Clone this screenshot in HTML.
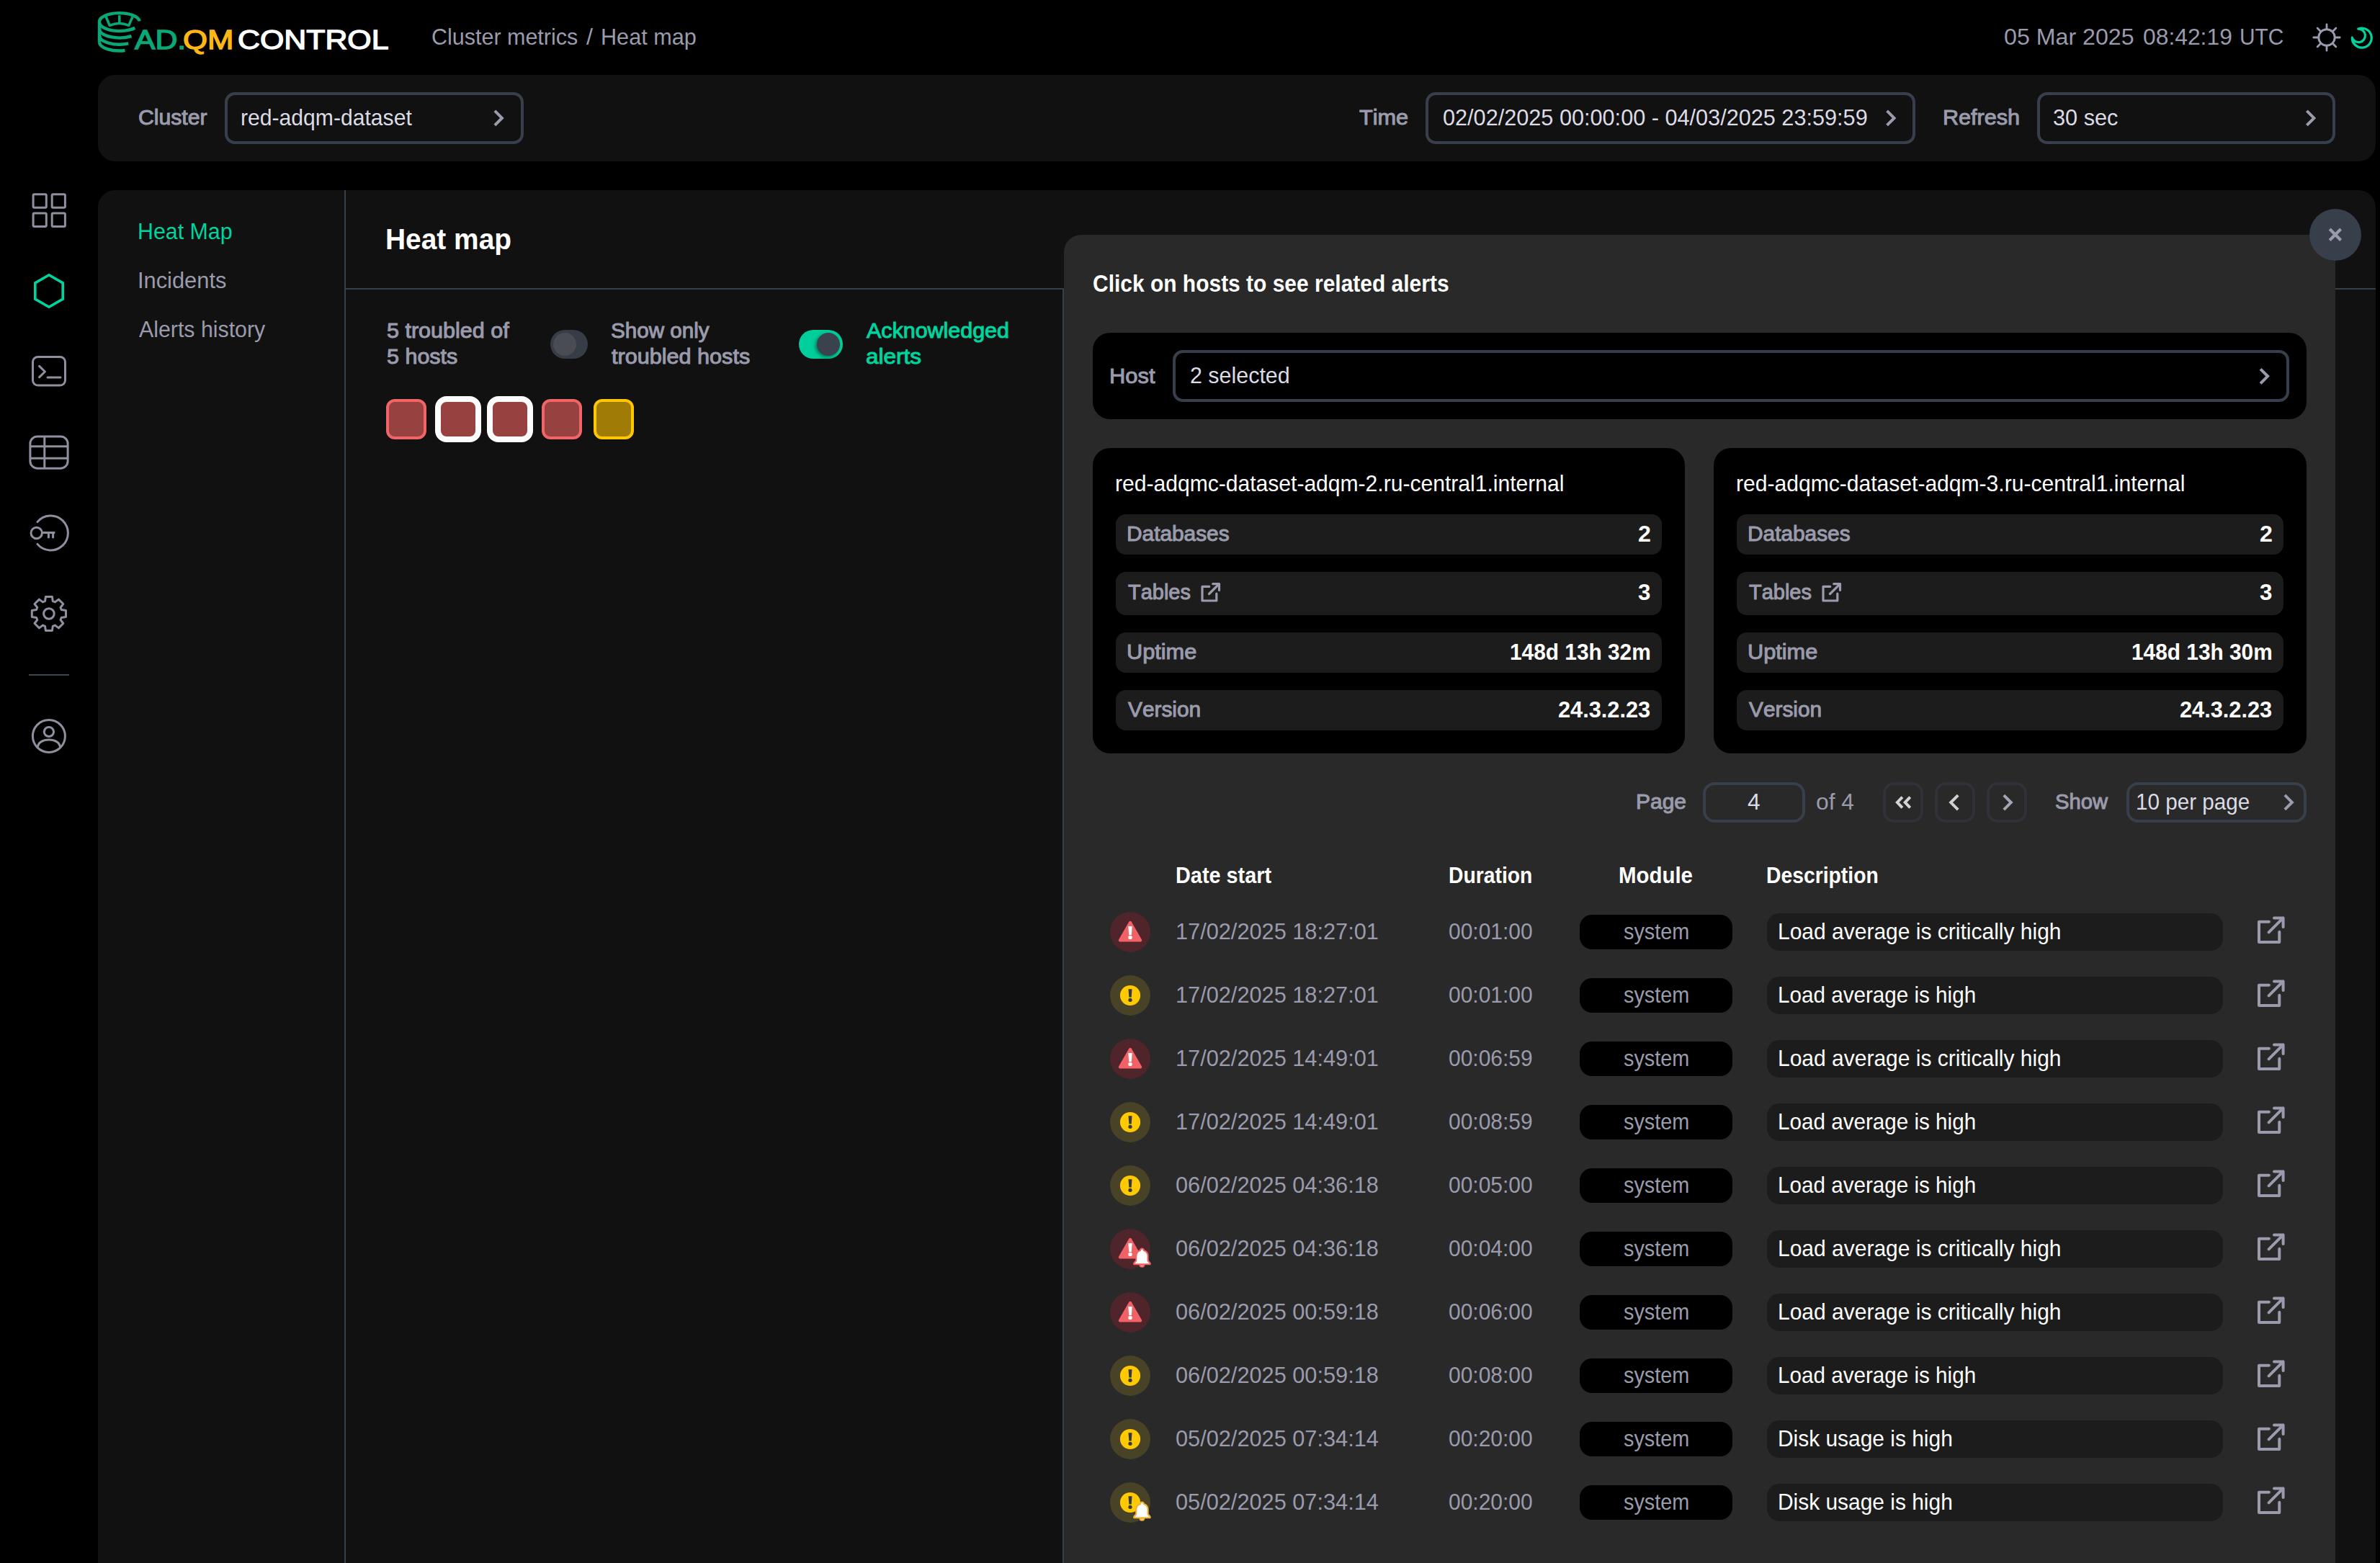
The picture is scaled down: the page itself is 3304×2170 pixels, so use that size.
<!DOCTYPE html>
<html lang="en"><head><meta charset="utf-8"><title>AD.QM CONTROL - Heat map</title>
<style>
html,body{margin:0;padding:0;background:#000;overflow:hidden;}
body{width:3304px;height:2170px;overflow:hidden;position:relative;font-family:"Liberation Sans",sans-serif;}
.b{position:absolute;}
.t{position:absolute;white-space:nowrap;line-height:1;transform-origin:0 0;font-kerning:none;}
svg.ov{position:absolute;left:0;top:0;pointer-events:none;}
</style></head><body>
<div class="b" style="left:136px;top:104px;width:3162px;height:120px;background:#111;border-radius:24px;"></div>
<div class="b" style="left:136px;top:264px;width:3162px;height:1906px;background:#111;border-radius:24px 24px 0 0;"></div>
<div class="b" style="left:478px;top:264px;width:2px;height:1906px;background:#35404b;"></div>
<div class="b" style="left:480px;top:400px;width:2818px;height:2px;background:#35404b;"></div>
<div class="b" style="left:1475px;top:400px;width:2px;height:1770px;background:#35404b;"></div>
<div class="b" style="left:1477px;top:326px;width:1765px;height:1844px;background:#292929;border-radius:24px 0 0 0;"></div>
<div class="b" style="left:3206px;top:290px;width:72px;height:72px;background:#363f4a;border-radius:50%;"></div>
<span class="t" id="lg_ad" style="left:186.57px;top:38.40px;font-size:36px;color:#0aa877;-webkit-text-stroke:1.3px;transform:scaleX(1.1861);">AD.</span>
<span class="t" id="lg_qm" style="left:253.98px;top:38.40px;font-size:36px;color:#fdb714;-webkit-text-stroke:1.3px;transform:scaleX(1.2150);">QM</span>
<span class="t" id="lg_ct" style="left:329.97px;top:38.40px;font-size:36px;color:#fff;-webkit-text-stroke:1.3px;transform:scaleX(1.1903);">CONTROL</span>
<span class="t" id="bc1" style="left:599.45px;top:36.10px;font-size:31.5px;color:#9a9bac;transform:scaleX(0.9677);">Cluster metrics</span>
<span class="t" id="bc2" style="left:814.00px;top:36.10px;font-size:31.5px;color:#9a9bac;transform:scaleX(1.0284);">/</span>
<span class="t" id="bc3" style="left:833.89px;top:36.10px;font-size:31.5px;color:#9a9bac;transform:scaleX(0.9717);">Heat map</span>
<span class="t" id="dt1" style="left:2781.74px;top:36.10px;font-size:31.5px;color:#9a9bac;transform:scaleX(1.0212);">05 Mar 2025</span>
<span class="t" id="dt2" style="left:2975.46px;top:35.10px;font-size:32px;color:#9a9bac;transform:scaleX(0.9943);">08:42:19</span>
<span class="t" id="dt3" style="left:3108.69px;top:36.10px;font-size:31.5px;color:#9a9bac;transform:scaleX(0.9491);">UTC</span>
<span class="t" id="f_cl" style="left:191.67px;top:148.30px;font-size:29.5px;color:#9a9bac;-webkit-text-stroke:1.0px;transform:scaleX(1.0224);">Cluster</span>
<div class="b" style="left:312px;top:128px;width:415px;height:72px;border:4px solid #363f4a;border-radius:14px;box-sizing:border-box;background:transparent"></div>
<span class="t" id="f_clv" style="left:334.40px;top:148.00px;font-size:31.5px;color:#dcdce6;transform:scaleX(0.9565);">red-adqm-dataset</span>
<span class="t" id="f_tm" style="left:1887.31px;top:148.30px;font-size:29.5px;color:#9a9bac;-webkit-text-stroke:1.0px;transform:scaleX(1.0396);">Time</span>
<div class="b" style="left:1979px;top:128px;width:680px;height:72px;border:4px solid #363f4a;border-radius:14px;box-sizing:border-box;background:transparent"></div>
<span class="t" id="f_tmv" style="left:2002.50px;top:147.00px;font-size:32px;color:#dcdce6;transform:scaleX(0.9578);">02/02/2025 00:00:00 - 04/03/2025 23:59:59</span>
<span class="t" id="f_rf" style="left:2697.29px;top:148.30px;font-size:29.5px;color:#9a9bac;-webkit-text-stroke:1.0px;transform:scaleX(1.0368);">Refresh</span>
<div class="b" style="left:2828px;top:128px;width:414px;height:72px;border:4px solid #363f4a;border-radius:14px;box-sizing:border-box;background:transparent"></div>
<span class="t" id="f_rfv" style="left:2849.83px;top:148.00px;font-size:31.5px;color:#dcdce6;transform:scaleX(0.9738);">30 sec</span>
<span class="t" id="n1" style="left:190.91px;top:306.60px;font-size:30.8px;color:#00d49e;transform:scaleX(0.9853);">Heat Map</span>
<span class="t" id="n2" style="left:191.26px;top:374.50px;font-size:30.8px;color:#9a9bac;transform:scaleX(1.0007);">Incidents</span>
<span class="t" id="n3" style="left:192.94px;top:442.90px;font-size:30.8px;color:#9a9bac;transform:scaleX(0.9844);">Alerts history</span>
<span class="t" id="hm_t" style="left:535.20px;top:311.80px;font-size:41px;color:#fff;font-weight:bold;transform:scaleX(0.9482);">Heat map</span>
<span class="t" id="hm_a1" style="left:536.78px;top:445.10px;font-size:29.0px;color:#9a9bac;-webkit-text-stroke:1.0px;transform:scaleX(1.0530);">5 troubled of</span>
<span class="t" id="hm_a2" style="left:536.78px;top:481.10px;font-size:29.0px;color:#9a9bac;-webkit-text-stroke:1.0px;transform:scaleX(1.0516);">5 hosts</span>
<div class="b" style="left:764px;top:458px;width:52px;height:40px;background:#363d47;border-radius:20px;"></div>
<div class="b" style="left:768px;top:462px;width:32px;height:32px;background:#494d53;border-radius:50%;"></div>
<span class="t" id="hm_b1" style="left:847.96px;top:445.10px;font-size:29.0px;color:#9a9bac;-webkit-text-stroke:1.0px;transform:scaleX(1.0209);">Show only</span>
<span class="t" id="hm_b2" style="left:848.84px;top:481.10px;font-size:29.0px;color:#9a9bac;-webkit-text-stroke:1.0px;transform:scaleX(1.0549);">troubled hosts</span>
<div class="b" style="left:1109px;top:458px;width:61px;height:40px;background:#00cf9b;border-radius:20px;"></div>
<div class="b" style="left:1134px;top:462px;width:32px;height:32px;background:#3a424d;border-radius:50%;box-shadow:-2px 2px 5px rgba(0,80,60,.7);"></div>
<span class="t" id="hm_c1" style="left:1202.94px;top:445.10px;font-size:29.0px;color:#00d49e;-webkit-text-stroke:1.0px;transform:scaleX(1.0493);">Acknowledged</span>
<span class="t" id="hm_c2" style="left:1201.66px;top:481.10px;font-size:29.0px;color:#00d49e;-webkit-text-stroke:1.0px;transform:scaleX(1.0855);">alerts</span>
<div class="b" style="left:536px;top:554px;width:56px;height:56px;box-sizing:border-box;border:4px solid #f26466;background:#974141;border-radius:12px"></div>
<div class="b" style="left:604px;top:550px;width:64px;height:64px;box-sizing:border-box;border:8px solid #fcfcfc;background:#974141;border-radius:16px"></div>
<div class="b" style="left:676px;top:550px;width:64px;height:64px;box-sizing:border-box;border:8px solid #fcfcfc;background:#974141;border-radius:16px"></div>
<div class="b" style="left:752px;top:554px;width:56px;height:56px;box-sizing:border-box;border:4px solid #f26466;background:#974141;border-radius:12px"></div>
<div class="b" style="left:824px;top:554px;width:56px;height:56px;box-sizing:border-box;border:4px solid #ffc700;background:#a07c07;border-radius:12px"></div>
<span class="t" id="d_t" style="left:1516.67px;top:378.00px;font-size:32.5px;color:#fff;font-weight:bold;transform:scaleX(0.9219);">Click on hosts to see related alerts</span>
<div class="b" style="left:1517px;top:462px;width:1685px;height:120px;background:#000;border-radius:24px;"></div>
<span class="t" id="d_h" style="left:1539.67px;top:506.50px;font-size:29.5px;color:#9a9bac;-webkit-text-stroke:1.0px;transform:scaleX(1.0462);">Host</span>
<div class="b" style="left:1628px;top:486px;width:1550px;height:72px;border:4px solid #363f4a;border-radius:14px;box-sizing:border-box;background:transparent"></div>
<span class="t" id="d_hv" style="left:1652.27px;top:506.20px;font-size:31.5px;color:#dcdce6;transform:scaleX(0.9658);">2 selected</span>
<div class="b" style="left:1517px;top:622px;width:822px;height:424px;background:#000;border-radius:24px;"></div>
<span class="t" id="c1_t" style="left:1548.20px;top:655.50px;font-size:31.5px;color:#fff;transform:scaleX(0.9546);">red-adqmc-dataset-adqm-2.ru-central1.internal</span>
<div class="b" style="left:1549px;top:714px;width:758px;height:56px;background:#1c1c1c;border-radius:14px;"></div>
<span class="t" id="c1_l0" style="left:1564.05px;top:726.20px;font-size:29.5px;color:#9a9bac;-webkit-text-stroke:1.0px;transform:scaleX(1.0113);">Databases</span>
<span class="t" id="c1_v0" style="left:2273.58px;top:724.90px;font-size:32px;color:#fff;font-weight:bold;transform:scaleX(1.0061);">2</span>
<div class="b" style="left:1549px;top:794px;width:758px;height:60px;background:#1c1c1c;border-radius:14px;"></div>
<span class="t" id="c1_l1" style="left:1565.85px;top:807.40px;font-size:29.5px;color:#9a9bac;-webkit-text-stroke:1.0px;transform:scaleX(0.9814);">Tables</span>
<span class="t" id="c1_v1" style="left:2273.98px;top:806.10px;font-size:32px;color:#fff;font-weight:bold;transform:scaleX(0.9745);">3</span>
<div class="b" style="left:1549px;top:878px;width:758px;height:56px;background:#1c1c1c;border-radius:14px;"></div>
<span class="t" id="c1_l2" style="left:1564.13px;top:890.20px;font-size:29.5px;color:#9a9bac;-webkit-text-stroke:1.0px;transform:scaleX(1.0406);">Uptime</span>
<span class="t" id="c1_v2" style="left:2096.32px;top:888.90px;font-size:32px;color:#fff;font-weight:bold;transform:scaleX(0.9325);">148d 13h 32m</span>
<div class="b" style="left:1549px;top:958px;width:758px;height:56px;background:#1c1c1c;border-radius:14px;"></div>
<span class="t" id="c1_l3" style="left:1566.37px;top:970.20px;font-size:29.5px;color:#9a9bac;-webkit-text-stroke:1.0px;transform:scaleX(1.0104);">Version</span>
<span class="t" id="c1_v3" style="left:2163.13px;top:968.90px;font-size:32px;color:#fff;font-weight:bold;transform:scaleX(0.9605);">24.3.2.23</span>
<div class="b" style="left:2379px;top:622px;width:823px;height:424px;background:#000;border-radius:24px;"></div>
<span class="t" id="c2_t" style="left:2410.20px;top:655.50px;font-size:31.5px;color:#fff;transform:scaleX(0.9546);">red-adqmc-dataset-adqm-3.ru-central1.internal</span>
<div class="b" style="left:2411px;top:714px;width:759px;height:56px;background:#1c1c1c;border-radius:14px;"></div>
<span class="t" id="c2_l0" style="left:2426.05px;top:726.20px;font-size:29.5px;color:#9a9bac;-webkit-text-stroke:1.0px;transform:scaleX(1.0113);">Databases</span>
<span class="t" id="c2_v0" style="left:3136.58px;top:724.90px;font-size:32px;color:#fff;font-weight:bold;transform:scaleX(1.0061);">2</span>
<div class="b" style="left:2411px;top:794px;width:759px;height:60px;background:#1c1c1c;border-radius:14px;"></div>
<span class="t" id="c2_l1" style="left:2427.85px;top:807.40px;font-size:29.5px;color:#9a9bac;-webkit-text-stroke:1.0px;transform:scaleX(0.9814);">Tables</span>
<span class="t" id="c2_v1" style="left:3136.98px;top:806.10px;font-size:32px;color:#fff;font-weight:bold;transform:scaleX(0.9745);">3</span>
<div class="b" style="left:2411px;top:878px;width:759px;height:56px;background:#1c1c1c;border-radius:14px;"></div>
<span class="t" id="c2_l2" style="left:2426.13px;top:890.20px;font-size:29.5px;color:#9a9bac;-webkit-text-stroke:1.0px;transform:scaleX(1.0406);">Uptime</span>
<span class="t" id="c2_v2" style="left:2959.32px;top:888.90px;font-size:32px;color:#fff;font-weight:bold;transform:scaleX(0.9325);">148d 13h 30m</span>
<div class="b" style="left:2411px;top:958px;width:759px;height:56px;background:#1c1c1c;border-radius:14px;"></div>
<span class="t" id="c2_l3" style="left:2428.37px;top:970.20px;font-size:29.5px;color:#9a9bac;-webkit-text-stroke:1.0px;transform:scaleX(1.0104);">Version</span>
<span class="t" id="c2_v3" style="left:3026.13px;top:968.90px;font-size:32px;color:#fff;font-weight:bold;transform:scaleX(0.9605);">24.3.2.23</span>
<span class="t" id="p_pg" style="left:2270.84px;top:1098.00px;font-size:29.5px;color:#9a9bac;-webkit-text-stroke:1.0px;transform:scaleX(1.0159);">Page</span>
<div class="b" style="left:2364px;top:1086px;width:142px;height:56px;border:4px solid #363f4a;border-radius:16px;box-sizing:border-box;background:transparent"></div>
<span class="t" id="p_n" style="left:2426.27px;top:1096.70px;font-size:32px;color:#dcdce6;transform:scaleX(0.9922);">4</span>
<span class="t" id="p_of" style="left:2521.06px;top:1097.70px;font-size:31.5px;color:#9a9bac;transform:scaleX(1.0100);">of 4</span>
<div class="b" style="left:2614px;top:1086px;width:56px;height:56px;border:4px solid #313239;border-radius:15px;box-sizing:border-box"></div>
<div class="b" style="left:2686px;top:1086px;width:56px;height:56px;border:4px solid #313239;border-radius:15px;box-sizing:border-box"></div>
<div class="b" style="left:2758px;top:1086px;width:56px;height:56px;border:4px solid #313239;border-radius:15px;box-sizing:border-box"></div>
<span class="t" id="p_sh" style="left:2853.48px;top:1098.00px;font-size:29.5px;color:#9a9bac;-webkit-text-stroke:1.0px;transform:scaleX(0.9886);">Show</span>
<div class="b" style="left:2952px;top:1086px;width:250px;height:56px;border:4px solid #363f4a;border-radius:16px;box-sizing:border-box;background:transparent"></div>
<span class="t" id="p_pp" style="left:2965.44px;top:1097.70px;font-size:31.5px;color:#dcdce6;transform:scaleX(0.9413);">10 per page</span>
<span class="t" id="th1" style="left:1632.17px;top:1199.10px;font-size:32px;color:#fff;font-weight:bold;transform:scaleX(0.9016);">Date start</span>
<span class="t" id="th2" style="left:2010.61px;top:1199.10px;font-size:32px;color:#fff;font-weight:bold;transform:scaleX(0.8845);">Duration</span>
<span class="t" id="th3" style="left:2247.03px;top:1199.10px;font-size:32px;color:#fff;font-weight:bold;transform:scaleX(0.9195);">Module</span>
<span class="t" id="th4" style="left:2451.51px;top:1199.10px;font-size:32px;color:#fff;font-weight:bold;transform:scaleX(0.8848);">Description</span>
<div class="b" style="left:1541px;top:1266px;width:56px;height:56px;background:#4f252b;border-radius:50%;"></div>
<span class="t" id="r0_d" style="left:1631.96px;top:1277.00px;font-size:32px;color:#9a9bac;transform:scaleX(0.9599);">17/02/2025 18:27:01</span>
<span class="t" id="r0_u" style="left:2010.53px;top:1277.00px;font-size:32px;color:#9a9bac;transform:scaleX(0.9364);">00:01:00</span>
<div class="b" style="left:2193px;top:1270px;width:212px;height:48px;background:#000;border-radius:17px;"></div>
<span class="t" id="r0_m" style="left:2253.60px;top:1278.00px;font-size:30.5px;color:#9a9bac;transform:scaleX(0.9452);">system</span>
<div class="b" style="left:2453px;top:1268px;width:633px;height:52px;background:#1c1c1c;border-radius:17px;"></div>
<span class="t" id="r0_e" style="left:2468.24px;top:1278.00px;font-size:31.5px;color:#fff;transform:scaleX(0.9523);">Load average is critically high</span>
<div class="b" style="left:1541px;top:1354px;width:56px;height:56px;background:#484327;border-radius:50%;"></div>
<span class="t" id="r1_d" style="left:1631.96px;top:1365.00px;font-size:32px;color:#9a9bac;transform:scaleX(0.9599);">17/02/2025 18:27:01</span>
<span class="t" id="r1_u" style="left:2010.53px;top:1365.00px;font-size:32px;color:#9a9bac;transform:scaleX(0.9364);">00:01:00</span>
<div class="b" style="left:2193px;top:1358px;width:212px;height:48px;background:#000;border-radius:17px;"></div>
<span class="t" id="r1_m" style="left:2253.60px;top:1366.00px;font-size:30.5px;color:#9a9bac;transform:scaleX(0.9452);">system</span>
<div class="b" style="left:2453px;top:1356px;width:633px;height:52px;background:#1c1c1c;border-radius:17px;"></div>
<span class="t" id="r1_e" style="left:2468.27px;top:1366.00px;font-size:31.5px;color:#fff;transform:scaleX(0.9408);">Load average is high</span>
<div class="b" style="left:1541px;top:1442px;width:56px;height:56px;background:#4f252b;border-radius:50%;"></div>
<span class="t" id="r2_d" style="left:1631.96px;top:1453.00px;font-size:32px;color:#9a9bac;transform:scaleX(0.9599);">17/02/2025 14:49:01</span>
<span class="t" id="r2_u" style="left:2010.53px;top:1453.00px;font-size:32px;color:#9a9bac;transform:scaleX(0.9364);">00:06:59</span>
<div class="b" style="left:2193px;top:1446px;width:212px;height:48px;background:#000;border-radius:17px;"></div>
<span class="t" id="r2_m" style="left:2253.60px;top:1454.00px;font-size:30.5px;color:#9a9bac;transform:scaleX(0.9452);">system</span>
<div class="b" style="left:2453px;top:1444px;width:633px;height:52px;background:#1c1c1c;border-radius:17px;"></div>
<span class="t" id="r2_e" style="left:2468.24px;top:1454.00px;font-size:31.5px;color:#fff;transform:scaleX(0.9523);">Load average is critically high</span>
<div class="b" style="left:1541px;top:1530px;width:56px;height:56px;background:#484327;border-radius:50%;"></div>
<span class="t" id="r3_d" style="left:1631.96px;top:1541.00px;font-size:32px;color:#9a9bac;transform:scaleX(0.9599);">17/02/2025 14:49:01</span>
<span class="t" id="r3_u" style="left:2010.53px;top:1541.00px;font-size:32px;color:#9a9bac;transform:scaleX(0.9364);">00:08:59</span>
<div class="b" style="left:2193px;top:1534px;width:212px;height:48px;background:#000;border-radius:17px;"></div>
<span class="t" id="r3_m" style="left:2253.60px;top:1542.00px;font-size:30.5px;color:#9a9bac;transform:scaleX(0.9452);">system</span>
<div class="b" style="left:2453px;top:1532px;width:633px;height:52px;background:#1c1c1c;border-radius:17px;"></div>
<span class="t" id="r3_e" style="left:2468.27px;top:1542.00px;font-size:31.5px;color:#fff;transform:scaleX(0.9408);">Load average is high</span>
<div class="b" style="left:1541px;top:1618px;width:56px;height:56px;background:#484327;border-radius:50%;"></div>
<span class="t" id="r4_d" style="left:1631.96px;top:1629.00px;font-size:32px;color:#9a9bac;transform:scaleX(0.9599);">06/02/2025 04:36:18</span>
<span class="t" id="r4_u" style="left:2010.53px;top:1629.00px;font-size:32px;color:#9a9bac;transform:scaleX(0.9364);">00:05:00</span>
<div class="b" style="left:2193px;top:1622px;width:212px;height:48px;background:#000;border-radius:17px;"></div>
<span class="t" id="r4_m" style="left:2253.60px;top:1630.00px;font-size:30.5px;color:#9a9bac;transform:scaleX(0.9452);">system</span>
<div class="b" style="left:2453px;top:1620px;width:633px;height:52px;background:#1c1c1c;border-radius:17px;"></div>
<span class="t" id="r4_e" style="left:2468.27px;top:1630.00px;font-size:31.5px;color:#fff;transform:scaleX(0.9408);">Load average is high</span>
<div class="b" style="left:1541px;top:1706px;width:56px;height:56px;background:#4f252b;border-radius:50%;"></div>
<span class="t" id="r5_d" style="left:1631.96px;top:1717.00px;font-size:32px;color:#9a9bac;transform:scaleX(0.9599);">06/02/2025 04:36:18</span>
<span class="t" id="r5_u" style="left:2010.53px;top:1717.00px;font-size:32px;color:#9a9bac;transform:scaleX(0.9364);">00:04:00</span>
<div class="b" style="left:2193px;top:1710px;width:212px;height:48px;background:#000;border-radius:17px;"></div>
<span class="t" id="r5_m" style="left:2253.60px;top:1718.00px;font-size:30.5px;color:#9a9bac;transform:scaleX(0.9452);">system</span>
<div class="b" style="left:2453px;top:1708px;width:633px;height:52px;background:#1c1c1c;border-radius:17px;"></div>
<span class="t" id="r5_e" style="left:2468.24px;top:1718.00px;font-size:31.5px;color:#fff;transform:scaleX(0.9523);">Load average is critically high</span>
<div class="b" style="left:1541px;top:1794px;width:56px;height:56px;background:#4f252b;border-radius:50%;"></div>
<span class="t" id="r6_d" style="left:1631.96px;top:1805.00px;font-size:32px;color:#9a9bac;transform:scaleX(0.9599);">06/02/2025 00:59:18</span>
<span class="t" id="r6_u" style="left:2010.53px;top:1805.00px;font-size:32px;color:#9a9bac;transform:scaleX(0.9364);">00:06:00</span>
<div class="b" style="left:2193px;top:1798px;width:212px;height:48px;background:#000;border-radius:17px;"></div>
<span class="t" id="r6_m" style="left:2253.60px;top:1806.00px;font-size:30.5px;color:#9a9bac;transform:scaleX(0.9452);">system</span>
<div class="b" style="left:2453px;top:1796px;width:633px;height:52px;background:#1c1c1c;border-radius:17px;"></div>
<span class="t" id="r6_e" style="left:2468.24px;top:1806.00px;font-size:31.5px;color:#fff;transform:scaleX(0.9523);">Load average is critically high</span>
<div class="b" style="left:1541px;top:1882px;width:56px;height:56px;background:#484327;border-radius:50%;"></div>
<span class="t" id="r7_d" style="left:1631.96px;top:1893.00px;font-size:32px;color:#9a9bac;transform:scaleX(0.9599);">06/02/2025 00:59:18</span>
<span class="t" id="r7_u" style="left:2010.53px;top:1893.00px;font-size:32px;color:#9a9bac;transform:scaleX(0.9364);">00:08:00</span>
<div class="b" style="left:2193px;top:1886px;width:212px;height:48px;background:#000;border-radius:17px;"></div>
<span class="t" id="r7_m" style="left:2253.60px;top:1894.00px;font-size:30.5px;color:#9a9bac;transform:scaleX(0.9452);">system</span>
<div class="b" style="left:2453px;top:1884px;width:633px;height:52px;background:#1c1c1c;border-radius:17px;"></div>
<span class="t" id="r7_e" style="left:2468.27px;top:1894.00px;font-size:31.5px;color:#fff;transform:scaleX(0.9408);">Load average is high</span>
<div class="b" style="left:1541px;top:1970px;width:56px;height:56px;background:#484327;border-radius:50%;"></div>
<span class="t" id="r8_d" style="left:1631.96px;top:1981.00px;font-size:32px;color:#9a9bac;transform:scaleX(0.9599);">05/02/2025 07:34:14</span>
<span class="t" id="r8_u" style="left:2010.53px;top:1981.00px;font-size:32px;color:#9a9bac;transform:scaleX(0.9364);">00:20:00</span>
<div class="b" style="left:2193px;top:1974px;width:212px;height:48px;background:#000;border-radius:17px;"></div>
<span class="t" id="r8_m" style="left:2253.60px;top:1982.00px;font-size:30.5px;color:#9a9bac;transform:scaleX(0.9452);">system</span>
<div class="b" style="left:2453px;top:1972px;width:633px;height:52px;background:#1c1c1c;border-radius:17px;"></div>
<span class="t" id="r8_e" style="left:2468.25px;top:1982.00px;font-size:31.5px;color:#fff;transform:scaleX(0.9498);">Disk usage is high</span>
<div class="b" style="left:1541px;top:2058px;width:56px;height:56px;background:#484327;border-radius:50%;"></div>
<span class="t" id="r9_d" style="left:1631.96px;top:2069.00px;font-size:32px;color:#9a9bac;transform:scaleX(0.9599);">05/02/2025 07:34:14</span>
<span class="t" id="r9_u" style="left:2010.53px;top:2069.00px;font-size:32px;color:#9a9bac;transform:scaleX(0.9364);">00:20:00</span>
<div class="b" style="left:2193px;top:2062px;width:212px;height:48px;background:#000;border-radius:17px;"></div>
<span class="t" id="r9_m" style="left:2253.60px;top:2070.00px;font-size:30.5px;color:#9a9bac;transform:scaleX(0.9452);">system</span>
<div class="b" style="left:2453px;top:2060px;width:633px;height:52px;background:#1c1c1c;border-radius:17px;"></div>
<span class="t" id="r9_e" style="left:2468.25px;top:2070.00px;font-size:31.5px;color:#fff;transform:scaleX(0.9498);">Disk usage is high</span>
<svg class="ov" width="3304" height="2170" viewBox="0 0 3304 2170">
<path d="M3234.2 318 L3249.6 333.4 M3249.6 318 L3234.2 333.4" stroke="#9a9bac" stroke-width="4.2" fill="none"/>
<path d="M686.9 153.9 L696.9 163.9 L686.9 173.9" stroke="#9a9bac" stroke-width="4" fill="none"/>
<path d="M2619.6 153.9 L2629.6 163.9 L2619.6 173.9" stroke="#9a9bac" stroke-width="4" fill="none"/>
<path d="M3202.4 153.9 L3212.4 163.9 L3202.4 173.9" stroke="#9a9bac" stroke-width="4" fill="none"/>
<path d="M3138.1 512.3 L3148.1 522.3 L3138.1 532.3" stroke="#9a9bac" stroke-width="4" fill="none"/>
<path d="M1678.7 814.4 H1669.0 V834.0 H1688.8 V824.2 M1678.5 824.5 L1692.5 810.6 M1683.7 810.6 H1692.5 V819.5" stroke="#9a9bac" stroke-width="3.2" fill="none" stroke-linecap="round" stroke-linejoin="round"/>
<path d="M2540.7 814.4 H2531.0 V834.0 H2550.8 V824.2 M2540.5 824.5 L2554.5 810.6 M2545.7 810.6 H2554.5 V819.5" stroke="#9a9bac" stroke-width="3.2" fill="none" stroke-linecap="round" stroke-linejoin="round"/>
<path d="M2640.9 1106.6 L2633.9 1114.0 L2640.9 1121.4" stroke="#d4d4d4" stroke-width="4" fill="none"/>
<path d="M2651.7 1106.6 L2644.7 1114.0 L2651.7 1121.4" stroke="#d4d4d4" stroke-width="4" fill="none"/>
<path d="M2718.2 1104.1 L2708.2 1114.1 L2718.2 1124.1" stroke="#d0d0d0" stroke-width="4" fill="none"/>
<path d="M2781.8 1104.1 L2791.8 1114.1 L2781.8 1124.1" stroke="#a3a4b5" stroke-width="4" fill="none"/>
<path d="M3171.9 1103.9 L3181.9 1113.9 L3171.9 1123.9" stroke="#9a9bac" stroke-width="4" fill="none"/>
<path d="M1569 1280.8 L1583.2 1305.4 H1554.8 Z" fill="#f16267" stroke="#f16267" stroke-width="4" stroke-linejoin="round"/>
<path d="M1566.3 1286.1 H1571.7 L1570.8 1297.9 H1567.2 Z" fill="#fff"/><circle cx="1569" cy="1301.4" r="2.7" fill="#fff"/>
<path d="M3149.9 1279.8 H3136.0 V1307.9 H3164.3 V1293.8 M3149.6 1294.3 L3169.6 1274.4 M3157.0 1274.4 H3169.6 V1287.1" stroke="#9a9bac" stroke-width="4.0" fill="none" stroke-linecap="round" stroke-linejoin="round"/>
<circle cx="1569" cy="1382" r="14.1" fill="#ffc900"/>
<path d="M1566.5 1373.2 H1571.5 L1570.7 1384.4 H1567.3 Z" fill="#2f3a45"/><circle cx="1569" cy="1388.3" r="2.6" fill="#2f3a45"/>
<path d="M3149.9 1367.8 H3136.0 V1395.9 H3164.3 V1381.8 M3149.6 1382.3 L3169.6 1362.4 M3157.0 1362.4 H3169.6 V1375.1" stroke="#9a9bac" stroke-width="4.0" fill="none" stroke-linecap="round" stroke-linejoin="round"/>
<path d="M1569 1456.8 L1583.2 1481.4 H1554.8 Z" fill="#f16267" stroke="#f16267" stroke-width="4" stroke-linejoin="round"/>
<path d="M1566.3 1462.1 H1571.7 L1570.8 1473.9 H1567.2 Z" fill="#fff"/><circle cx="1569" cy="1477.4" r="2.7" fill="#fff"/>
<path d="M3149.9 1455.8 H3136.0 V1483.9 H3164.3 V1469.8 M3149.6 1470.3 L3169.6 1450.4 M3157.0 1450.4 H3169.6 V1463.1" stroke="#9a9bac" stroke-width="4.0" fill="none" stroke-linecap="round" stroke-linejoin="round"/>
<circle cx="1569" cy="1558" r="14.1" fill="#ffc900"/>
<path d="M1566.5 1549.2 H1571.5 L1570.7 1560.4 H1567.3 Z" fill="#2f3a45"/><circle cx="1569" cy="1564.3" r="2.6" fill="#2f3a45"/>
<path d="M3149.9 1543.8 H3136.0 V1571.9 H3164.3 V1557.8 M3149.6 1558.3 L3169.6 1538.4 M3157.0 1538.4 H3169.6 V1551.1" stroke="#9a9bac" stroke-width="4.0" fill="none" stroke-linecap="round" stroke-linejoin="round"/>
<circle cx="1569" cy="1646" r="14.1" fill="#ffc900"/>
<path d="M1566.5 1637.2 H1571.5 L1570.7 1648.4 H1567.3 Z" fill="#2f3a45"/><circle cx="1569" cy="1652.3" r="2.6" fill="#2f3a45"/>
<path d="M3149.9 1631.8 H3136.0 V1659.9 H3164.3 V1645.8 M3149.6 1646.3 L3169.6 1626.4 M3157.0 1626.4 H3169.6 V1639.1" stroke="#9a9bac" stroke-width="4.0" fill="none" stroke-linecap="round" stroke-linejoin="round"/>
<path d="M1569 1720.8 L1583.2 1745.4 H1554.8 Z" fill="#f16267" stroke="#f16267" stroke-width="4" stroke-linejoin="round"/>
<path d="M1566.3 1726.1 H1571.7 L1570.8 1737.9 H1567.2 Z" fill="#fff"/><circle cx="1569" cy="1741.4" r="2.7" fill="#fff"/>
<g transform="translate(1585.4 1732.3)"><path d="M0 1.2 C-1.5 1.2 -2.4 2.4 -2.4 3.6 C-6.6 4.8 -8.2 8.4 -8.2 12 V18 L-11.2 21.4 V23 H11.2 V21.4 L8.2 18 V12 C8.2 8.4 6.6 4.8 2.4 3.6 C2.4 2.4 1.5 1.2 0 1.2 Z M-2.8 23.6 A2.8 2.8 0 0 0 2.8 23.6 Z" fill="#fdfdfd" stroke="#f16267" stroke-width="2.1" stroke-linejoin="round"/></g>
<path d="M3149.9 1719.8 H3136.0 V1747.9 H3164.3 V1733.8 M3149.6 1734.3 L3169.6 1714.4 M3157.0 1714.4 H3169.6 V1727.1" stroke="#9a9bac" stroke-width="4.0" fill="none" stroke-linecap="round" stroke-linejoin="round"/>
<path d="M1569 1808.8 L1583.2 1833.4 H1554.8 Z" fill="#f16267" stroke="#f16267" stroke-width="4" stroke-linejoin="round"/>
<path d="M1566.3 1814.1 H1571.7 L1570.8 1825.9 H1567.2 Z" fill="#fff"/><circle cx="1569" cy="1829.4" r="2.7" fill="#fff"/>
<path d="M3149.9 1807.8 H3136.0 V1835.9 H3164.3 V1821.8 M3149.6 1822.3 L3169.6 1802.4 M3157.0 1802.4 H3169.6 V1815.1" stroke="#9a9bac" stroke-width="4.0" fill="none" stroke-linecap="round" stroke-linejoin="round"/>
<circle cx="1569" cy="1910" r="14.1" fill="#ffc900"/>
<path d="M1566.5 1901.2 H1571.5 L1570.7 1912.4 H1567.3 Z" fill="#2f3a45"/><circle cx="1569" cy="1916.3" r="2.6" fill="#2f3a45"/>
<path d="M3149.9 1895.8 H3136.0 V1923.9 H3164.3 V1909.8 M3149.6 1910.3 L3169.6 1890.4 M3157.0 1890.4 H3169.6 V1903.1" stroke="#9a9bac" stroke-width="4.0" fill="none" stroke-linecap="round" stroke-linejoin="round"/>
<circle cx="1569" cy="1998" r="14.1" fill="#ffc900"/>
<path d="M1566.5 1989.2 H1571.5 L1570.7 2000.4 H1567.3 Z" fill="#2f3a45"/><circle cx="1569" cy="2004.3" r="2.6" fill="#2f3a45"/>
<path d="M3149.9 1983.8 H3136.0 V2011.9 H3164.3 V1997.8 M3149.6 1998.3 L3169.6 1978.4 M3157.0 1978.4 H3169.6 V1991.1" stroke="#9a9bac" stroke-width="4.0" fill="none" stroke-linecap="round" stroke-linejoin="round"/>
<circle cx="1569" cy="2086" r="14.1" fill="#ffc900"/>
<path d="M1566.5 2077.2 H1571.5 L1570.7 2088.4 H1567.3 Z" fill="#2f3a45"/><circle cx="1569" cy="2092.3" r="2.6" fill="#2f3a45"/>
<g transform="translate(1585.4 2084.3)"><path d="M0 1.2 C-1.5 1.2 -2.4 2.4 -2.4 3.6 C-6.6 4.8 -8.2 8.4 -8.2 12 V18 L-11.2 21.4 V23 H11.2 V21.4 L8.2 18 V12 C8.2 8.4 6.6 4.8 2.4 3.6 C2.4 2.4 1.5 1.2 0 1.2 Z M-2.8 23.6 A2.8 2.8 0 0 0 2.8 23.6 Z" fill="#fdfdfd" stroke="#f1b238" stroke-width="2.1" stroke-linejoin="round"/></g>
<path d="M3149.9 2071.8 H3136.0 V2099.9 H3164.3 V2085.8 M3149.6 2086.3 L3169.6 2066.4 M3157.0 2066.4 H3169.6 V2079.1" stroke="#9a9bac" stroke-width="4.0" fill="none" stroke-linecap="round" stroke-linejoin="round"/>
<rect x="46.1" y="269.8" width="18.2" height="18.4" rx="1.5" fill="none" stroke="#8e8f9f" stroke-width="3"/>
<rect x="72.2" y="269.8" width="18.2" height="18.4" rx="1.5" fill="none" stroke="#8e8f9f" stroke-width="3"/>
<rect x="46.1" y="296.1" width="18.2" height="18.4" rx="1.5" fill="none" stroke="#8e8f9f" stroke-width="3"/>
<rect x="72.2" y="296.1" width="18.2" height="18.4" rx="1.5" fill="none" stroke="#8e8f9f" stroke-width="3"/>
<polygon points="68.0,381.8 87.2,392.9 87.2,415.1 68.0,426.2 48.8,415.1 48.8,392.9" fill="none" stroke="#00d49e" stroke-width="3.6" stroke-linejoin="miter"/>
<rect x="45.5" y="495.5" width="45" height="39.5" rx="7" fill="none" stroke="#8e8f9f" stroke-width="3"/>
<path d="M54.6 508.4 L62.4 516 L54.6 523.6 M66 524 H84" fill="none" stroke="#8e8f9f" stroke-width="3" stroke-linecap="round" stroke-linejoin="round"/>
<rect x="41.9" y="606" width="52.2" height="44.2" rx="10" fill="none" stroke="#8e8f9f" stroke-width="3"/>
<path d="M61.8 606 V650.2 M41.9 619.8 H94.1 M41.9 636.2 H94.1" fill="none" stroke="#8e8f9f" stroke-width="3"/>
<path d="M52.0 724.6 A24 24 0 1 1 52.0 755.4" fill="none" stroke="#8e8f9f" stroke-width="3" stroke-linecap="round"/>
<circle cx="50.7" cy="740" r="7.7" fill="none" stroke="#8e8f9f" stroke-width="3"/>
<path d="M58.4 739.5 H76.3 M67.4 739.5 V747.3 M73.6 739.5 V747.3" fill="none" stroke="#8e8f9f" stroke-width="3"/>
<path d="M62.5 834.6 L63.4 828.4 L72.4 828.4 L73.3 834.6 L76.4 835.9 L81.4 832.1 L87.8 838.5 L84.0 843.5 L85.3 846.6 L91.5 847.5 L91.5 856.5 L85.3 857.4 L84.0 860.5 L87.8 865.5 L81.4 871.9 L76.4 868.1 L73.3 869.4 L72.4 875.6 L63.4 875.6 L62.5 869.4 L59.4 868.1 L54.4 871.9 L48.0 865.5 L51.8 860.5 L50.5 857.4 L44.3 856.5 L44.3 847.5 L50.5 846.6 L51.8 843.5 L48.0 838.5 L54.4 832.1 L59.4 835.9 Z" fill="none" stroke="#8e8f9f" stroke-width="3" stroke-linejoin="round"/>
<circle cx="67.9" cy="852" r="7.3" fill="none" stroke="#8e8f9f" stroke-width="3"/>
<rect x="40" y="936" width="56" height="2" fill="#3a4651"/>
<circle cx="67.9" cy="1022" r="22.5" fill="none" stroke="#8e8f9f" stroke-width="3"/>
<circle cx="67.9" cy="1016" r="6.6" fill="none" stroke="#8e8f9f" stroke-width="3"/>
<path d="M52.3 1037.5 C53 1023.5 82.8 1023.5 83.5 1037.5" fill="none" stroke="#8e8f9f" stroke-width="3"/>
<circle cx="3230" cy="52" r="11.2" fill="none" stroke="#9a9bac" stroke-width="2.9"/>
<path d="M3242.0 52.0 L3248.2 52.0 M3238.5 60.5 L3242.9 64.9 M3230.0 64.0 L3230.0 70.2 M3221.5 60.5 L3217.1 64.9 M3218.0 52.0 L3211.8 52.0 M3221.5 43.5 L3217.1 39.1 M3230.0 40.0 L3230.0 33.8 M3238.5 43.5 L3242.9 39.1 " stroke="#9a9bac" stroke-width="2.8" fill="none" stroke-linecap="round"/>
<path d="M3273.8 40.1 A13.5 13.5 0 1 1 3265.3 52.2 A9.3 9.3 0 1 0 3273.8 40.1 Z" fill="none" stroke="#00d49e" stroke-width="3.2" stroke-linejoin="round"/>
<g transform="translate(136 17)" fill="none" stroke="#0aa877" stroke-width="4.4"><path d="M57.6 12.4 A27.85 12.1 0 0 0 2.0 14 V41.4"/><path d="M2.0 14.0 A27.85 12.1 0 0 0 51.3 21.7"/><path d="M2.0 23.4 A27.85 12.1 0 0 0 46.5 33.1"/><path d="M2.0 32.6 A27.85 12.1 0 0 0 42.2 43.4"/><path d="M2.0 41.4 A27.85 12.1 0 0 0 37.5 53.0"/><path d="M11.2 6.4 L16.2 18.3 Q29.8 12.9 42.8 18.3 L48 6.4 M29.8 4.2 V14.8" stroke-width="3.5" stroke-linejoin="round"/></g>
</svg>
</body></html>
